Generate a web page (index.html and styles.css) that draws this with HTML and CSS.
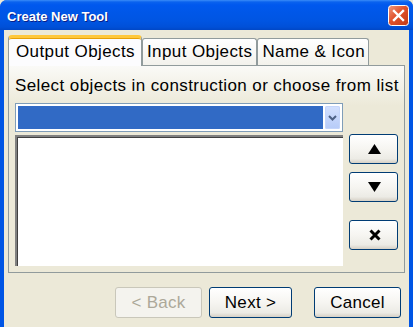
FILE: index.html
```html
<!DOCTYPE html>
<html>
<head>
<meta charset="utf-8">
<link rel="stylesheet" href="styles.css">
</head>
<body>
<div class="window">
  <div class="titlebar">
    <span class="title">Create New Tool</span>
    <div class="close">
      <svg width="21" height="21" viewBox="0 0 21 21">
        <defs>
          <linearGradient id="cg" x1="0" y1="0" x2="1" y2="1">
            <stop offset="0" stop-color="#F09A80"/>
            <stop offset="0.45" stop-color="#E0522C"/>
            <stop offset="1" stop-color="#C23A14"/>
          </linearGradient>
        </defs>
        <rect x="0.5" y="0.5" width="20" height="20" rx="3" fill="url(#cg)" stroke="#FFFFFF"/>
        <path d="M6 6 L15 15 M15 6 L6 15" stroke="#FFFFFF" stroke-width="2.4" stroke-linecap="square"/>
      </svg>
    </div>
  </div>
  <div class="client">
    <div class="tabs">
      <div class="tab active">Output Objects</div>
      <div class="tab">Input Objects</div>
      <div class="tab last">Name &amp; Icon</div>
    </div>
    <div class="panel">
      <div class="label">Select objects in construction or choose from list</div>
      <div class="row">
        <div class="main">
          <div class="combo">
            <div class="combo-value"></div>
            <div class="combo-btn">
              <svg width="9" height="6" viewBox="0 0 9 6"><path d="M1 1 L4.5 4.5 L8 1" fill="none" stroke="#4D6185" stroke-width="2"/></svg>
            </div>
          </div>
          <div class="list"></div>
        </div>
        <div class="side">
          <div class="btn sbtn">
            <svg width="13" height="10" viewBox="0 0 13 10"><path d="M6.5 0 L13 10 L0 10 Z" fill="#000"/></svg>
          </div>
          <div class="btn sbtn">
            <svg width="13" height="10" viewBox="0 0 13 10"><path d="M0 0 L13 0 L6.5 10 Z" fill="#000"/></svg>
          </div>
          <div class="btn sbtn del">
            <svg width="12" height="12" viewBox="0 0 12 12"><path d="M1.5 1.5 L10.5 10.5 M10.5 1.5 L1.5 10.5" stroke="#000" stroke-width="3"/></svg>
          </div>
        </div>
      </div>
    </div>
    <div class="footer">
      <div class="btn fbtn disabled back">&lt; Back</div>
      <div class="btn fbtn next">Next &gt;</div>
      <div class="btn fbtn cancel">Cancel</div>
    </div>
  </div>
</div>
</body>
</html>
```
FILE: styles.css
```css
html, body {
  margin: 0;
  padding: 0;
  background: #ECE9D8;
}
body {
  width: 413px;
  height: 327px;
  overflow: hidden;
  font-family: "Liberation Sans", Arial, sans-serif;
}
.window {
  width: 413px;
  height: 340px;
  display: flex;
  flex-direction: column;
  background: #0055E5;
  border-radius: 7px 7px 0 0;
}
.titlebar {
  height: 30px;
  flex: none;
  display: flex;
  align-items: center;
  justify-content: space-between;
  padding: 0 4px 0 7px;
  border-radius: 7px 7px 0 0;
  background: linear-gradient(#3A8CF8 0, #0A62EE 2px, #0058EE 5px, #0057E8 40%, #0055E2 70%, #0050D8 90%, #0047C6 100%);
}
.title {
  color: #FFFFFF;
  font-weight: bold;
  font-size: 13px;
  padding-top: 2px;
  text-shadow: 1px 1px 0 #0A1E88;
}
.close {
  width: 21px;
  height: 21px;
  margin-top: 1px;
}
.close svg {
  display: block;
}
.client {
  flex: 1;
  margin: 0 4px 0 4px;
  background: #ECE9D8;
  padding: 0 4px 0 4px;
  display: flex;
  flex-direction: column;
}
.tabs {
  display: flex;
  align-items: flex-end;
  padding-top: 5px;
  height: 30px;
  position: relative;
  z-index: 2;
}
.tab {
  height: 27px;
  box-sizing: border-box;
  padding: 2px 4px 0 4px;
  border: 1px solid #919B9C;
  border-bottom: none;
  border-radius: 3px 3px 0 0;
  background: linear-gradient(#FFFFFF, #F3F2EC);
  font-size: 17px;
  letter-spacing: 0.4px;
  color: #000;
  line-height: 22px;
  white-space: nowrap;
}
.tab.last {
  padding-right: 3px;
}
.tab.active {
  height: 31px;
  margin-bottom: -1px;
  padding: 3px 6px 0 7px;
  background: #FCFCFE;
  border-top: 3px solid #FFC83C;
  border-radius: 4px 4px 0 0;
  box-shadow: inset 0 1px 0 #E6A00A;
}
.panel {
  height: 208px;
  box-sizing: border-box;
  border: 1px solid #919B9C;
  background: linear-gradient(#FAFAF7, #ECE9D8 40px);
  padding: 6px 6px 4px 6px;
  display: flex;
  flex-direction: column;
}
.label {
  font-size: 17px;
  letter-spacing: 0.4px;
  line-height: 22px;
  height: 31px;
  padding-top: 3px;
  box-sizing: border-box;
  color: #000;
  white-space: nowrap;
}
.row {
  flex: 1;
  display: flex;
  gap: 6px;
}
.main {
  width: 328px;
  display: flex;
  flex-direction: column;
  gap: 3px;
}
.combo {
  height: 29px;
  box-sizing: border-box;
  border: 1px solid #7F9DB9;
  background: #FFFFFF;
  display: flex;
  padding: 2px;
  gap: 2px;
}
.combo-value {
  flex: 1;
  background: #316AC5;
}
.combo-btn {
  width: 15px;
  border-radius: 2px;
  background: linear-gradient(#D4E1FE, #B6CBF8);
  box-shadow: inset 0 0 0 1px #C4D5FB;
  display: flex;
  align-items: center;
  justify-content: center;
}
.combo-btn svg {
  display: block;
}
.list {
  flex: 1;
  background: #FFFFFF;
  border-top: 2px solid #808080;
  border-left: 2px solid #808080;
  box-shadow: inset 1px 1px 0 #404040;
  margin-bottom: 2px;
}
.side {
  display: flex;
  flex-direction: column;
  padding-top: 31px;
  gap: 8px;
}
.btn {
  box-sizing: border-box;
  border: 1px solid #003C74;
  border-radius: 3px;
  background: linear-gradient(#FFFFFF 0, #F6F5F1 50%, #ECEBE5 85%, #D6D0C5 100%);
  display: flex;
  align-items: center;
  justify-content: center;
  color: #000;
}
.sbtn {
  width: 49px;
  height: 30px;
}
.sbtn svg {
  display: block;
  margin-left: 2px;
}
.sbtn.del {
  margin-top: 10px;
}
.footer {
  display: flex;
  padding-top: 14px;
  padding-left: 107px;
}
.fbtn {
  height: 31px;
  font-size: 17px;
  letter-spacing: 0.3px;
}
.back {
  width: 87px;
}
.next {
  width: 83px;
  margin-left: 7px;
}
.cancel {
  width: 87px;
  margin-left: 22px;
}
.disabled {
  border-color: #C9C7BA;
  background: #F4F3EE;
  color: #ACA899;
}
```
